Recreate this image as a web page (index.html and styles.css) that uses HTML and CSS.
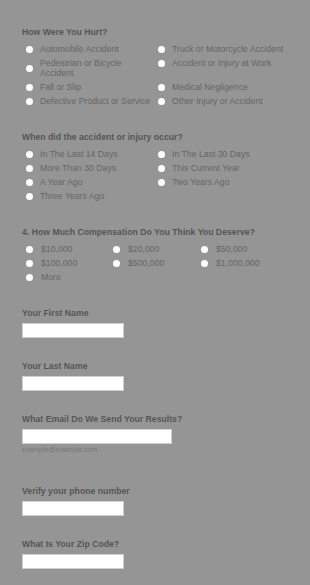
FILE: index.html
```html
<!DOCTYPE html>
<html lang="en">
<head>
    <meta charset="UTF-8">
    <meta name="viewport" content="width=device-width, initial-scale=1.0">
    <title>Case Evaluation</title>
    <link rel="stylesheet" href="styles.css">
</head>
<body>

    <form class="form">
        <div class="question">
            <div class="label">How Were You Hurt?</div>
            <div class="options cols-2">
                <label class="option"><span class="radio"></span><span>Automobile Accident</span></label>
                <label class="option"><span class="radio"></span><span>Truck or Motorcycle Accident</span></label>
                <label class="option"><span class="radio"></span><span>Pedestrian or Bicycle Accident</span></label>
                <label class="option"><span class="radio"></span><span>Accident or Injury at Work</span></label>
                <label class="option"><span class="radio"></span><span>Fall or Slip</span></label>
                <label class="option"><span class="radio"></span><span>Medical Negligence</span></label>
                <label class="option"><span class="radio"></span><span>Defective Product or Service</span></label>
                <label class="option"><span class="radio"></span><span>Other Injury or Accident</span></label>
            </div>
        </div>

        <div class="question">
            <div class="label">When did the accident or injury occur?</div>
            <div class="options cols-2">
                <label class="option"><span class="radio"></span><span>In The Last 14 Days</span></label>
                <label class="option"><span class="radio"></span><span>In The Last 30 Days</span></label>
                <label class="option"><span class="radio"></span><span>More Than 30 Days</span></label>
                <label class="option"><span class="radio"></span><span>This Current Year</span></label>
                <label class="option"><span class="radio"></span><span>A Year Ago</span></label>
                <label class="option"><span class="radio"></span><span>Two Years Ago</span></label>
                <label class="option"><span class="radio"></span><span>Three Years Ago</span></label>
            </div>
        </div>

        <div class="question">
            <div class="label">4. How Much Compensation Do You Think You Deserve?</div>
            <div class="options cols-3">
                <label class="option"><span class="radio"></span><span>$10,000</span></label>
                <label class="option"><span class="radio"></span><span>$20,000</span></label>
                <label class="option"><span class="radio"></span><span>$50,000</span></label>
                <label class="option"><span class="radio"></span><span>$100,000</span></label>
                <label class="option"><span class="radio"></span><span>$500,000</span></label>
                <label class="option"><span class="radio"></span><span>$1,000,000</span></label>
                <label class="option"><span class="radio"></span><span>More</span></label>
            </div>
        </div>

        <div class="field">
            <label class="label" for="firstName">Your First Name</label>
            <input type="text" id="firstName" class="input">
        </div>

        <div class="field">
            <label class="label" for="lastName">Your Last Name</label>
            <input type="text" id="lastName" class="input">
        </div>

        <div class="field">
            <label class="label" for="email">What Email Do We Send Your Results?</label>
            <input type="text" id="email" class="input input-wide">
            <div class="hint">example@example.com</div>
        </div>

        <div class="field field-spaced">
            <label class="label" for="phone">Verify your phone number</label>
            <input type="text" id="phone" class="input">
        </div>

        <div class="field">
            <label class="label" for="zip">What Is Your Zip Code?</label>
            <input type="text" id="zip" class="input">
        </div>
    </form>

</body>
</html>
```

FILE: styles.css
```css
body {
    font-family: "Liberation Sans", Arial, sans-serif;
    background-color: #959595;
    margin: 0;
    padding: 0;
}

.form {
    padding: 27px 22px 0 22px;
}

.label {
    display: block;
    font-size: 8.7px;
    font-weight: bold;
    color: #555;
    line-height: 11px;
    margin-bottom: 4px;
}

.question {
    margin-bottom: 26px;
}

.question .label {
    margin-bottom: 6px;
}

.options {
    display: grid;
    row-gap: 4px;
    align-items: start;
}

.cols-2 {
    grid-template-columns: 132px 134px;
}

.cols-3 {
    grid-template-columns: 87px 88px 91px;
}

.option {
    display: flex;
    align-items: center;
    font-size: 8.7px;
    line-height: 10px;
    color: #666;
}

.radio {
    flex: none;
    width: 7px;
    height: 7px;
    border-radius: 50%;
    background-color: #fff;
    margin: 1px 7px 0 4px;
}

.cols-3 .radio {
    margin-right: 8px;
}

.field {
    margin-bottom: 23px;
}

.input {
    display: block;
    box-sizing: border-box;
    width: 102px;
    height: 15px;
    margin: 0;
    padding: 0 3px;
    border: 1px solid #cfcfcf;
    background-color: #fff;
}

.input-wide {
    width: 150px;
}

.hint {
    font-size: 7px;
    color: #787878;
    margin-top: 2px;
}

.field-spaced {
    margin-top: 33px;
}
```
